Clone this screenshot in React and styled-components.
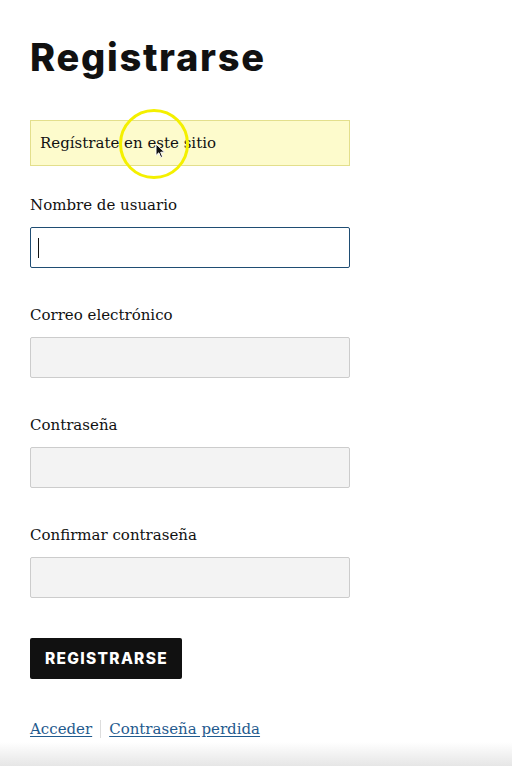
import React from 'react';
import styled, { createGlobalStyle } from 'styled-components';

const GlobalStyle = createGlobalStyle`
  html, body {
    margin: 0;
    padding: 0;
    background: #fff;
  }
  body {
    font-family: "DejaVu Serif", "Liberation Serif", serif;
    color: #1a1a1a;
  }
`;

const Page = styled.div`
  position: relative;
  min-height: 766px;
  box-sizing: border-box;
  padding: 32px 30px 0 30px;
  overflow: hidden;

  &::after {
    content: "";
    position: absolute;
    left: 0;
    right: 0;
    bottom: 0;
    height: 24px;
    background: linear-gradient(to bottom, rgba(232, 232, 232, 0), #e6e6e6);
    pointer-events: none;
  }
`;

const Title = styled.h1`
  margin: 0 0 38px;
  font-family: Inter, "Liberation Sans", sans-serif;
  font-weight: 800;
  font-size: 38px;
  line-height: 50px;
  letter-spacing: 1.7px;
  color: #111;
`;

const Form = styled.form`
  width: 320px;
`;

const Notice = styled.div`
  position: relative;
  box-sizing: border-box;
  height: 46px;
  padding: 0 9px;
  display: flex;
  align-items: center;
  background: #fdfbcc;
  border: 1px solid #e3df8c;
  font-size: 15px;
  color: #111;
  margin-bottom: 27px;
`;

const Highlight = styled.span`
  position: absolute;
  left: 88px;
  top: -12px;
  width: 64px;
  height: 64px;
  border: 3px solid #f4f000;
  border-radius: 50%;
  pointer-events: none;
`;

const Pointer = styled.svg`
  position: absolute;
  left: 124px;
  top: 22px;
  width: 11px;
  height: 16px;
`;

const Field = styled.div`
  margin-bottom: 35px;
`;

const Label = styled.label`
  display: block;
  font-size: 15px;
  line-height: 24px;
  color: #111;
  margin-bottom: 10px;
`;

const Input = styled.div`
  position: relative;
  box-sizing: border-box;
  height: 41px;
  border-radius: 2px;
  border: 1px solid ${p => (p.$focus ? '#1f4d73' : '#cccccc')};
  background: ${p => (p.$focus ? '#fff' : '#f3f3f3')};

  ${p => p.$focus && `
    &::before {
      content: "";
      position: absolute;
      left: 7px;
      top: 10px;
      width: 1px;
      height: 20px;
      background: #111;
    }
  `}
`;

const Button = styled.button`
  margin-top: 5px;
  height: 41px;
  padding: 0 14px 0 15px;
  border: 0;
  border-radius: 2px;
  background: #111;
  color: #fff;
  font-family: Inter, "Liberation Sans", sans-serif;
  font-weight: 800;
  font-size: 15.5px;
  letter-spacing: 1.3px;
  cursor: pointer;
`;

const Links = styled.p`
  margin: 38px 0 0;
  display: flex;
  align-items: center;
  font-size: 15px;
  line-height: 24px;
`;

const Link = styled.a`
  color: #1f5a8e;
  text-decoration: underline;
  text-underline-offset: 2px;
`;

const Sep = styled.span`
  display: inline-block;
  width: 1px;
  height: 18px;
  background: #ddd;
  margin: 0 8px;
`;

const fields = [
  { label: 'Nombre de usuario', focus: true },
  { label: 'Correo electrónico' },
  { label: 'Contraseña' },
  { label: 'Confirmar contraseña' },
];

export default function App() {
  return (
    <Page>
      <GlobalStyle />
      <Title>Registrarse</Title>
      <Form>
        <Notice>
          Regístrate en este sitio
          <Highlight />
          <Pointer viewBox="0 0 11 16">
            <path d="M1 1 L1 12.5 L3.8 9.8 L5.8 14.5 L7.6 13.7 L5.7 9.2 L9.6 9.2 Z" fill="#111" stroke="#fff" strokeWidth="1" />
          </Pointer>
        </Notice>
        {fields.map(f => (
          <Field key={f.label}>
            <Label>{f.label}</Label>
            <Input $focus={f.focus} />
          </Field>
        ))}
        <Button type="button">REGISTRARSE</Button>
        <Links>
          <Link href="#">Acceder</Link>
          <Sep />
          <Link href="#">Contraseña perdida</Link>
        </Links>
      </Form>
    </Page>
  );
}
